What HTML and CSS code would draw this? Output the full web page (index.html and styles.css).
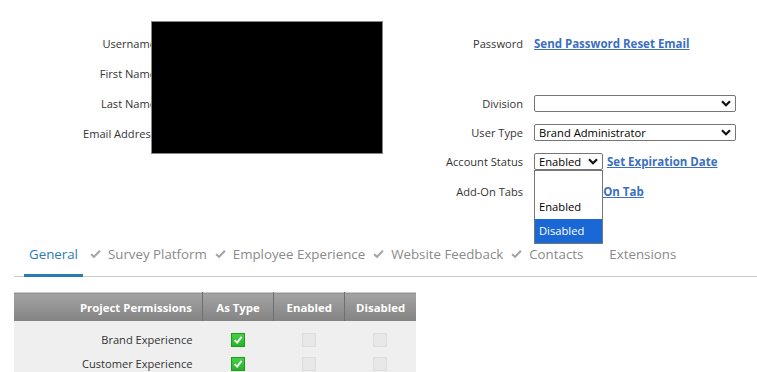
FILE: index.html
```html
<!DOCTYPE html>
<html lang="en">
<head>
    <meta charset="UTF-8">
    <title>Edit User</title>
    <link rel="stylesheet" href="styles.css">
</head>
<body>
    <div class="user-form">
        <div class="col-left">
            <div class="label">Username</div><div class="field"></div>
            <div class="label">First Name</div><div class="field"></div>
            <div class="label">Last Name</div><div class="field"></div>
            <div class="label">Email Address</div><div class="field"></div>
            <div class="redacted"></div>
        </div>

        <div class="col-right">
            <div class="label">Password</div>
            <div class="field"><a href="#" class="link">Send Password Reset Email</a></div>

            <div class="label"></div><div class="field"></div>

            <div class="label">Division</div>
            <div class="field">
                <div class="select wide">
                    <select><option></option></select>
                    <svg class="chev" viewBox="0 0 10 7"><path d="M1 1.2 L5 5.2 L9 1.2" fill="none" stroke="#111" stroke-width="2.2"/></svg>
                </div>
            </div>

            <div class="label">User Type</div>
            <div class="field">
                <div class="select wide">
                    <select><option>Brand Administrator</option></select>
                    <svg class="chev" viewBox="0 0 10 7"><path d="M1 1.2 L5 5.2 L9 1.2" fill="none" stroke="#111" stroke-width="2.2"/></svg>
                </div>
            </div>

            <div class="label">Account Status</div>
            <div class="field">
                <div class="select small">
                    <select><option>Enabled</option><option>Disabled</option></select>
                    <svg class="chev" viewBox="0 0 10 7"><path d="M1 1.2 L5 5.2 L9 1.2" fill="none" stroke="#111" stroke-width="2.2"/></svg>
                    <ul class="dropdown">
                        <li></li>
                        <li>Enabled</li>
                        <li class="active">Disabled</li>
                    </ul>
                </div>
                <a href="#" class="link">Set Expiration Date</a>
            </div>

            <div class="label">Add-On Tabs</div>
            <div class="field"><a href="#" class="link">Add an Add-On Tab</a></div>
        </div>
    </div>

    <ul class="tabs">
        <li class="tab current">General</li>
        <li class="tab"><svg class="tick" viewBox="0 0 12 10"><path d="M1.2 5.2 L4.4 8.2 L10.8 1.4" fill="none" stroke="#a3a3a3" stroke-width="2.2"/></svg>Survey Platform</li>
        <li class="tab"><svg class="tick" viewBox="0 0 12 10"><path d="M1.2 5.2 L4.4 8.2 L10.8 1.4" fill="none" stroke="#a3a3a3" stroke-width="2.2"/></svg>Employee Experience</li>
        <li class="tab"><svg class="tick" viewBox="0 0 12 10"><path d="M1.2 5.2 L4.4 8.2 L10.8 1.4" fill="none" stroke="#a3a3a3" stroke-width="2.2"/></svg>Website Feedback</li>
        <li class="tab"><svg class="tick" viewBox="0 0 12 10"><path d="M1.2 5.2 L4.4 8.2 L10.8 1.4" fill="none" stroke="#a3a3a3" stroke-width="2.2"/></svg>Contacts</li>
        <li class="tab"><svg class="tick hidden" viewBox="0 0 12 10"></svg>Extensions</li>
    </ul>

    <table class="perms">
        <colgroup>
            <col class="c-name">
            <col class="c-opt">
            <col class="c-opt">
            <col class="c-opt">
        </colgroup>
        <thead>
            <tr>
                <th class="name">Project Permissions</th>
                <th>As Type</th>
                <th>Enabled</th>
                <th>Disabled</th>
            </tr>
        </thead>
        <tbody>
            <tr class="first">
                <td class="name">Brand Experience</td>
                <td><span class="box on"><svg viewBox="0 0 14 14"><path d="M3 7.2 L6 10 L11.2 3.4" fill="none" stroke="#fff" stroke-width="2.2"/></svg></span></td>
                <td><span class="box off"></span></td>
                <td><span class="box off"></span></td>
            </tr>
            <tr>
                <td class="name">Customer Experience</td>
                <td><span class="box on"><svg viewBox="0 0 14 14"><path d="M3 7.2 L6 10 L11.2 3.4" fill="none" stroke="#fff" stroke-width="2.2"/></svg></span></td>
                <td><span class="box off"></span></td>
                <td><span class="box off"></span></td>
            </tr>
        </tbody>
    </table>
</body>
</html>
```

FILE: styles.css
```css
body {
    margin: 0;
    font-family: "Open Sans", Arial, sans-serif;
    font-size: 11.1px;
    color: #333;
    background: #fff;
}
.user-form {
    display: flex;
    padding-top: 28px;
}
.col-left {
    position: relative;
    width: 400px;
    display: grid;
    grid-template-columns: 156px 1fr;
    grid-auto-rows: 30px;
    align-content: start;
}
.col-right {
    display: grid;
    grid-template-columns: 123px 1fr;
    grid-template-rows: 30px 30px 30px 29px 28px 32px;
    column-gap: 11px;
}
.label {
    text-align: right;
    align-self: center;
    white-space: nowrap;
}
.field {
    display: flex;
    align-items: center;
    gap: 4px;
}
.redacted {
    position: absolute;
    left: 151px;
    top: -7px;
    width: 230px;
    height: 131px;
    background: #000;
    border: 1px solid #888;
}
.link {
    color: #3b6fc2;
    font-weight: bold;
    font-size: 11.5px;
    text-decoration: underline;
    white-space: nowrap;
}
.select {
    position: relative;
    height: 17px;
}
.select.wide { width: 202px; }
.select.small { width: 69px; }
.select select {
    appearance: none;
    width: 100%;
    height: 17px;
    margin: 0;
    padding: 0 0 0 4px;
    border: 1px solid #767676;
    border-radius: 2px;
    background: #fff;
    font-family: inherit;
    font-size: 11.2px;
    color: #000;
    line-height: 15px;
}
.chev {
    position: absolute;
    right: 5px;
    top: 5px;
    width: 10px;
    height: 7px;
    pointer-events: none;
}
.dropdown {
    position: absolute;
    left: 0;
    top: 17px;
    width: 67px;
    margin: 0;
    padding: 0;
    list-style: none;
    background: #fff;
    border: 1px solid #767676;
    z-index: 2;
    font-size: 11.2px;
}
.dropdown li {
    height: 24px;
    line-height: 24px;
    padding-left: 4px;
    color: #000;
}
.dropdown li.active {
    background: #1a68d6;
    color: #fff;
}
.tabs {
    display: flex;
    margin: 33px 0 0 14px;
    padding: 0 0 0 10px;
    list-style: none;
    border-bottom: 1px solid #ccc;
    font-size: 13.3px;
    line-height: 20px;
    color: #8a8a8a;
}
.tab {
    display: flex;
    align-items: center;
    height: 20px;
    padding: 4px 4px 13px 4px;
    margin-bottom: -1px;
    white-space: nowrap;
}
.tab.current {
    color: #2b7bb3;
    border-bottom: 3px solid #2b7bb3;
    padding: 4px 5px 10px 5px;
    margin-right: 3px;
}
.tick {
    width: 11px;
    height: 10px;
    margin-right: 7px;
}
.tick.hidden { visibility: hidden; }
.perms {
    margin: 15px 0 0 14px;
    border-collapse: collapse;
    table-layout: fixed;
    width: 402px;
    background: #efefef;
    border-top: 1px solid #ccc;
    font-size: 11.1px;
}
.c-name { width: 188px; }
.c-opt { width: 71px; }
.perms th {
    height: 28px;
    padding: 0 10px;
    background: linear-gradient(#a3a3a3, #838383);
    color: #fff;
    font-weight: bold;
    font-size: 11.4px;
    border-left: 1px solid #6f6f6f;
    text-align: center;
    white-space: nowrap;
}
.perms th:first-child { border-left: none; }
.perms th.name { text-align: right; }
.perms td {
    height: 24px;
    padding: 0 10px;
    text-align: center;
}
.perms tr.first td { padding-top: 6px; }
.perms td.name { text-align: right; }
.box {
    display: inline-block;
    width: 14px;
    height: 14px;
    vertical-align: middle;
    box-sizing: border-box;
}
.box svg { display: block; width: 12px; height: 12px; }
.box.on {
    background: linear-gradient(#45d045, #28b428);
    border: 1px solid #1f9a1f;
}
.box.off {
    background: #e8e8e8;
    border: 1px solid #dcdcdc;
}
```
